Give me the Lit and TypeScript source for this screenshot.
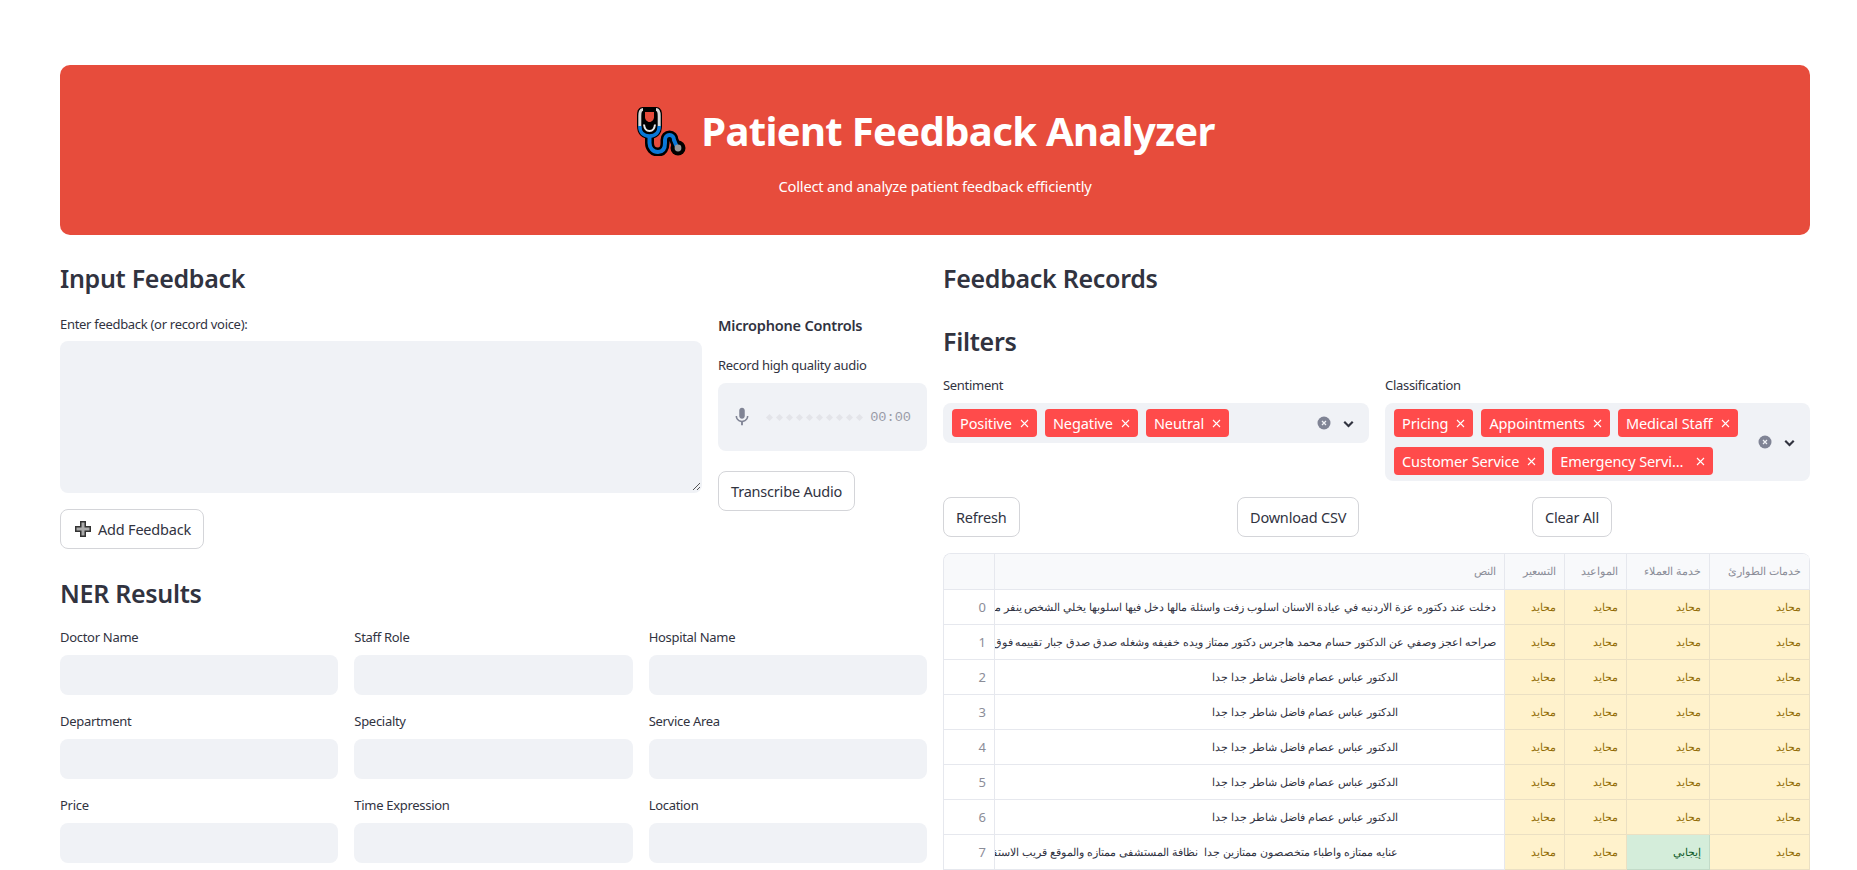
import {LitElement, css, html} from 'lit';
import {customElement} from 'lit/decorators.js';

const NEUTRAL = 'محايد';
const DOCTOR = 'الدكتور عباس عصام فاضل شاطر جدا جدا';

const rows = [
  {text: 'دخلت عند دكتوره عزة الاردنيه في عيادة الاسنان اسلوب زفت واسئلة مالها دخل فيها اسلوبها يخلي الشخص ينفر منها', service: NEUTRAL, shifted: false},
  {text: 'صراحه اعجز وصفي عن الدكتور حسام محمد هاجرس دكتور ممتاز ويده خفيفه وشغله صدق صدق جبار تقييمه فوق الممتاز', service: NEUTRAL, shifted: false},
  {text: DOCTOR, service: NEUTRAL, shifted: true},
  {text: DOCTOR, service: NEUTRAL, shifted: true},
  {text: DOCTOR, service: NEUTRAL, shifted: true},
  {text: DOCTOR, service: NEUTRAL, shifted: true},
  {text: DOCTOR, service: NEUTRAL, shifted: true},
  {text: 'عنايه ممتازه واطباء متخصصون ممتازين جدا  نظافة المستشفى ممتازه والموقع قريب الاستقبال', service: 'إيجابي', shifted: true},
];

const nerFields = [
  'Doctor Name', 'Staff Role', 'Hospital Name',
  'Department', 'Specialty', 'Service Area',
  'Price', 'Time Expression', 'Location',
];

const chevron = html`<svg class="chevron" viewBox="0 0 24 24"><path d="M6 9.5l6 6 6-6" fill="none" stroke="#31333f" stroke-width="3"/></svg>`;
const clearIcon = html`<svg class="clear" viewBox="0 0 14 14"><circle cx="7" cy="7" r="6.5" fill="#808495"/><path d="M5 5l4 4M9 5l-4 4" stroke="#f0f2f6" stroke-width="1.2"/></svg>`;

@customElement('app-root')
export class AppRoot extends LitElement {
  static styles = css`
    :host {
      display: block;
      height: 870px;
      overflow: hidden;
      background: #fff;
      color: #31333f;
      font-family: "Noto Sans", "DejaVu Sans", sans-serif;
      font-stretch: condensed;
    }

    .page {
      padding: 65px 47px 0 60px;
    }

    .banner {
      display: flex;
      flex-direction: column;
      align-items: center;
      height: 170px;
      box-sizing: border-box;
      padding-top: 37px;
      background: #e74c3c;
      border-radius: 10px;
      color: #fff;
    }

    .banner-title {
      display: flex;
      align-items: center;
      gap: 15px;
      margin: 0;
      padding-right: 19px;
      font-size: 40px;
      line-height: 58px;
      font-weight: 700;
      letter-spacing: -0.65px;
    }

    .banner-title svg {
      width: 50px;
      height: 50px;
    }

    .banner-sub {
      margin: 16px 0 0;
      font-size: 14.7px;
      line-height: 20px;
      letter-spacing: -0.2px;
    }

    .columns {
      display: grid;
      grid-template-columns: 867px 867px;
      gap: 16px;
      margin-top: 24px;
    }

    h2 {
      margin: 0;
      font-size: 25px;
      line-height: 38px;
      font-weight: 600;
      letter-spacing: -0.3px;
    }

    .label {
      font-size: 13px;
      line-height: 20px;
      letter-spacing: -0.3px;
    }

    .input-row {
      display: grid;
      grid-template-columns: 642px 209px;
      gap: 16px;
      margin-top: 17px;
    }

    .textarea {
      position: relative;
      height: 152px;
      margin-top: 7px;
      background: #f0f2f6;
      border-radius: 8px;
    }

    .resize {
      position: absolute;
      right: 1px;
      bottom: 2px;
      width: 9px;
      height: 9px;
    }

    .btn {
      display: inline-flex;
      align-items: center;
      justify-content: center;
      box-sizing: border-box;
      height: 40px;
      padding: 0 12px;
      background: #fff;
      border: 1px solid #d4d5d9;
      border-radius: 8px;
      color: #31333f;
      font-family: inherit;
      font-stretch: condensed;
      font-size: 14.5px;
      letter-spacing: -0.2px;
    }

    .add {
      margin-top: 16px;
    }

    .add svg {
      width: 20px;
      height: 20px;
      margin-right: 5px;
    }

    .mic-title {
      font-size: 14.5px;
      line-height: 20px;
      font-weight: 600;
      letter-spacing: -0.2px;
      margin-top: 1px;
    }

    .mic-label {
      margin-top: 20px;
    }

    .recorder {
      display: flex;
      align-items: center;
      height: 68px;
      margin-top: 8px;
      padding: 0 16px 0 13px;
      background: #f0f2f6;
      border-radius: 8px;
    }

    .recorder svg {
      flex: none;
      width: 22px;
      height: 22px;
    }

    .dots {
      display: flex;
      gap: 5px;
      margin-left: 14px;
    }

    .dots i {
      width: 5px;
      height: 5px;
      background: #e3e4e9;
      transform: rotate(45deg);
    }

    .time {
      margin-left: auto;
      font-family: "Liberation Mono", monospace;
      font-stretch: normal;
      font-size: 13.6px;
      color: #9a9ca8;
    }

    .transcribe {
      margin-top: 20px;
    }

    .ner-title {
      margin-top: 25px;
    }

    .ner-grid {
      display: grid;
      grid-template-columns: repeat(3, 1fr);
      gap: 16px;
      margin-top: 15px;
    }

    .ner-box {
      height: 40px;
      margin-top: 8px;
      background: #f0f2f6;
      border-radius: 8px;
    }

    .filters-title {
      margin-top: 25px;
    }

    .filters {
      display: grid;
      grid-template-columns: 426px 425px;
      gap: 16px;
      margin-top: 15px;
    }

    .select {
      display: flex;
      align-items: center;
      margin-top: 8px;
      padding: 6px 8px 6px 9px;
      min-height: 28px;
      background: #f0f2f6;
      border-radius: 8px;
    }

    .tags {
      flex: 1;
      display: flex;
      flex-wrap: wrap;
      gap: 10px 8px;
    }

    .tag {
      display: inline-flex;
      align-items: center;
      height: 28px;
      padding: 0 8px;
      gap: 8px;
      background: #ff4b4b;
      border-radius: 4px;
      color: #fff;
      font-size: 14.5px;
      letter-spacing: -0.1px;
      white-space: nowrap;
    }

    .tag-name {
      max-width: 128px;
      overflow: hidden;
      text-overflow: ellipsis;
    }

    .tag svg {
      width: 9px;
      height: 9px;
    }

    .clear {
      width: 14px;
      height: 14px;
      margin: 0 9px 0 6px;
    }

    .chevron {
      width: 17px;
      height: 17px;
      margin-right: 4px;
    }

    .actions {
      display: grid;
      grid-template-columns: 294px 295px auto;
      margin-top: 16px;
    }

    .actions .btn {
      justify-self: start;
    }

    .grid {
      display: grid;
      grid-template-columns: 51px 510px 60px 62px 83px 100px;
      grid-template-rows: 36px;
      grid-auto-rows: 35px;
      width: 867px;
      margin-top: 16px;
      box-sizing: border-box;
      border-left: 1px solid #e6e8ee;
      border-top: 1px solid #e6e8ee;
      border-radius: 8px 8px 0 0;
      overflow: hidden;
      font-family: "Liberation Sans", sans-serif;
      font-stretch: normal;
      font-size: 10.7px;
    }

    .cell {
      display: flex;
      align-items: center;
      justify-content: flex-end;
      box-sizing: border-box;
      padding: 0 8px;
      border-right: 1px solid #e6e8ee;
      border-bottom: 1px solid #e6e8ee;
      white-space: pre;
      overflow: hidden;
    }

    .head {
      background: #f8f9fb;
      color: #8b8d98;
    }

    .index {
      background: #fff;
      color: #8b8d98;
      font-family: "Noto Sans", sans-serif;
      font-size: 13px;
    }

    .text {
      direction: rtl;
      justify-content: flex-start;
      color: #31333f;
      padding: 0 8px 0 0;
    }

    .text span {
      flex: none;
    }

    .text.shifted {
      padding-right: 106px;
    }

    .neutral {
      background: #fff2cc;
      color: #926c05;
      border-color: #ebe0c3;
    }

    .positive {
      background: #d4edda;
      color: #0f5c2a;
      border-color: #c2dbc8;
    }
  `;

  render() {
    return html`
      <div class="page">
        <header class="banner">
          <h1 class="banner-title">
            <svg viewBox="0 0 50 50">
              <path d="M13.500 31v6c0 5 3.500 9 8.500 9s7-4 7-9v-3c0-3 2-5 4.500-5s4.500 2 4.500 5l3 7" fill="none" stroke="#000" stroke-width="9" stroke-linecap="round"/>
              <circle cx="42" cy="42" r="7.500" fill="#000"/>
              <path d="M7 1h13c4 0 6 3 6 8v11c0 8-5 13-12.500 13S1 28 1 20V9c0-5 2-8 6-8z" fill="#000"/>
              <path d="M7 3.500C4.500 3.500 3.800 6 3.800 10v10M20 3.500c2.500 0 3.200 2.500 3.200 6.500v10" fill="none" stroke="#d8d8d8" stroke-width="3"/>
              <path d="M3.800 20c0 6.500 3.700 10 9.700 10s9.700-3.500 9.700-10" fill="none" stroke="#0a78d7" stroke-width="3.500"/>
              <path d="M13.500 30V37c0 5 3.500 9 8.500 9s7-4 7-9v-3c0-3 2-5 4.500-5s4.500 2 4.500 5l2.500 6" fill="none" stroke="#0a78d7" stroke-width="4"/>
              <path d="M8 18.500c.5 4.500 2.500 6.500 5.500 6.500s5-2 5.500-6.500" fill="none" stroke="#e8e8e8" stroke-width="2"/>
              <path d="M9 6h9v5c0 2.500-2 5-4.500 5S9 13.500 9 11z" fill="#e74c3c"/>
              <circle cx="42" cy="42" r="3.400" fill="#999"/>
            </svg>
            Patient Feedback Analyzer
          </h1>
          <p class="banner-sub">Collect and analyze patient feedback efficiently</p>
        </header>

        <div class="columns">
          <section>
            <h2>Input Feedback</h2>
            <div class="input-row">
              <div>
                <div class="label">Enter feedback (or record voice):</div>
                <div class="textarea">
                  <svg class="resize" viewBox="0 0 9 9"><path d="M1 8l7-7M5 8l3-3" stroke="#555" stroke-width="1"/></svg>
                </div>
                <button class="btn add">
                  <svg viewBox="0 0 20 20"><path d="M10 2v16M2 10h16" stroke="#333" stroke-width="6"/><path d="M10 3.500v13M3.500 10h13" stroke="#aaa" stroke-width="3"/></svg>
                  Add Feedback
                </button>
              </div>
              <div>
                <div class="mic-title">Microphone Controls</div>
                <div class="label mic-label">Record high quality audio</div>
                <div class="recorder">
                  <svg viewBox="0 0 24 24"><path fill="#808495" d="M12 14c1.700 0 3-1.300 3-3V5c0-1.700-1.300-3-3-3S9 3.300 9 5v6c0 1.700 1.300 3 3 3zm5.300-3c0 3-2.500 5.100-5.300 5.100S6.700 14 6.700 11H5c0 3.400 2.700 6.200 6 6.700V21h2v-3.300c3.300-.5 6-3.300 6-6.700h-1.700z"/></svg>
                  <div class="dots">${Array.from({length: 10}, () => html`<i></i>`)}</div>
                  <span class="time">00:00</span>
                </div>
                <button class="btn transcribe">Transcribe Audio</button>
              </div>
            </div>

            <h2 class="ner-title">NER Results</h2>
            <div class="ner-grid">
              ${nerFields.map((name) => html`
                <div>
                  <div class="label">${name}</div>
                  <div class="ner-box"></div>
                </div>
              `)}
            </div>
          </section>

          <section>
            <h2>Feedback Records</h2>
            <h2 class="filters-title">Filters</h2>
            <div class="filters">
              <div>
                <div class="label">Sentiment</div>
                ${this.renderSelect(['Positive', 'Negative', 'Neutral'])}
              </div>
              <div>
                <div class="label">Classification</div>
                ${this.renderSelect(['Pricing', 'Appointments', 'Medical Staff', 'Customer Service', 'Emergency Services'])}
              </div>
            </div>
            <div class="actions">
              <button class="btn">Refresh</button>
              <button class="btn">Download CSV</button>
              <button class="btn">Clear All</button>
            </div>
            <div class="grid">
              <div class="cell head"></div>
              <div class="cell head">النص</div>
              <div class="cell head">التسعير</div>
              <div class="cell head">المواعيد</div>
              <div class="cell head">خدمة العملاء</div>
              <div class="cell head">خدمات الطوارئ</div>
              ${rows.map((row, i) => html`
                <div class="cell index">${i}</div>
                <div class="cell text ${row.shifted ? 'shifted' : ''}"><span>${row.text}</span></div>
                <div class="cell neutral">${NEUTRAL}</div>
                <div class="cell neutral">${NEUTRAL}</div>
                <div class="cell ${row.service === NEUTRAL ? 'neutral' : 'positive'}">${row.service}</div>
                <div class="cell neutral">${NEUTRAL}</div>
              `)}
            </div>
          </section>
        </div>
      </div>
    `;
  }

  renderSelect(tags: string[]) {
    return html`
      <div class="select">
        <div class="tags">
          ${tags.map((tag) => html`
            <span class="tag"><span class="tag-name">${tag}</span><svg viewBox="0 0 9 9"><path d="M1 1l7 7M8 1l-7 7" stroke="#fff" stroke-width="1.100"/></svg></span>
          `)}
        </div>
        ${clearIcon}
        ${chevron}
      </div>
    `;
  }
}
